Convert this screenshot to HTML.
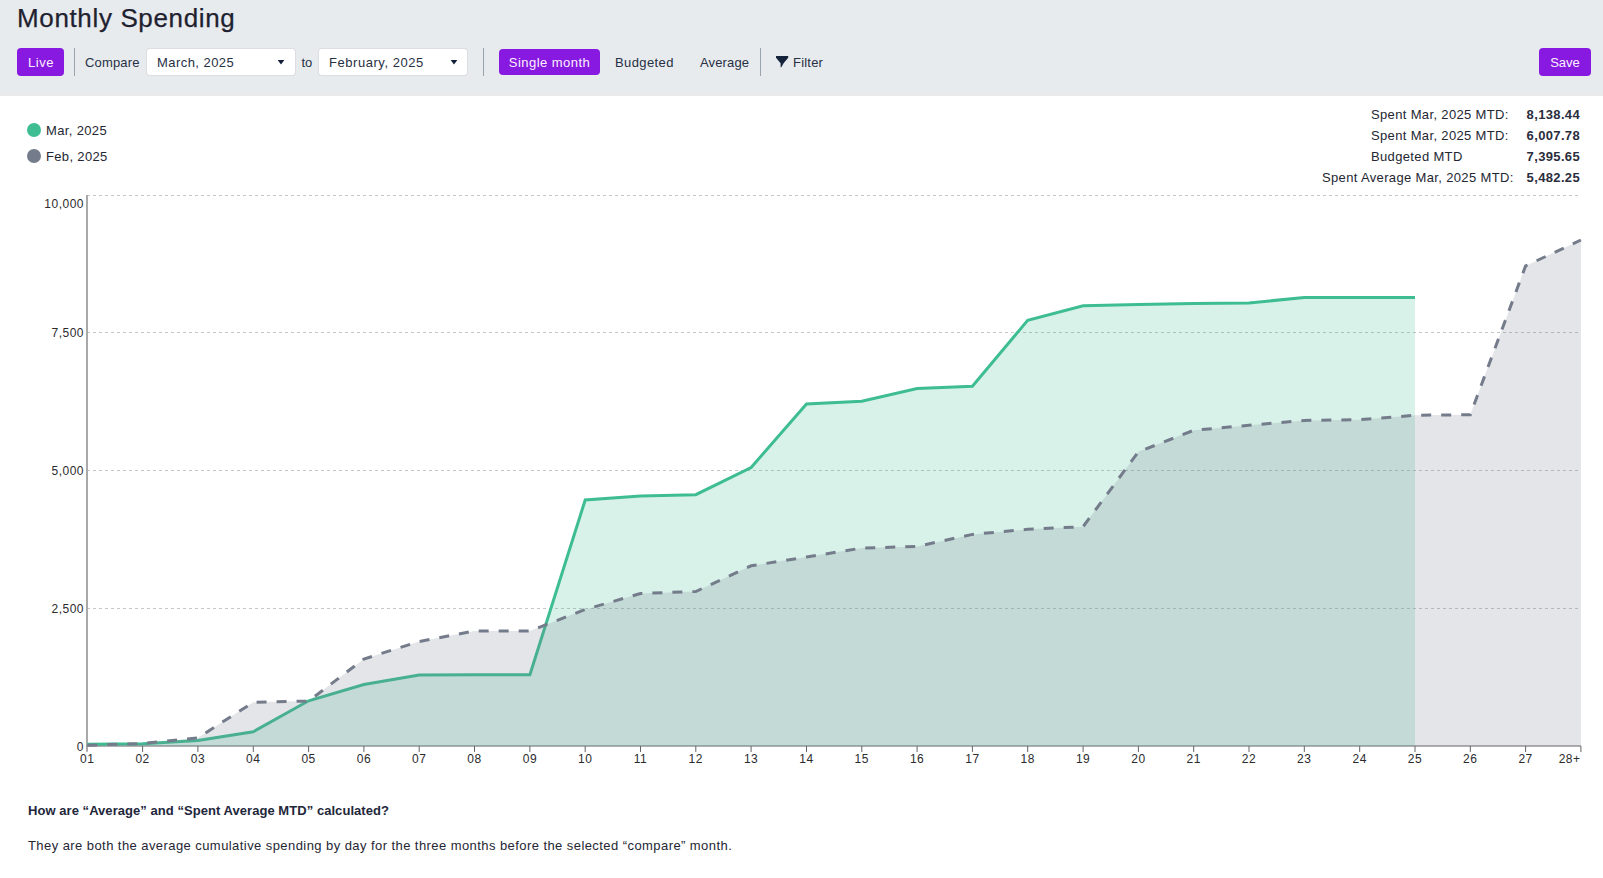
<!DOCTYPE html>
<html><head><meta charset="utf-8"><style>
*{box-sizing:border-box}
html,body{margin:0;padding:0;width:1603px;height:878px;overflow:hidden;background:#fff;font-family:"Liberation Sans",sans-serif;color:#242733}
.hdr{position:absolute;left:0;top:0;width:1603px;height:96px;background:#e7ebee}
.abs{position:absolute;white-space:nowrap}
.title{left:17px;top:3px;font-size:26px;line-height:30px;letter-spacing:0.64px;color:#1f2130;-webkit-text-stroke:0.25px #1f2130}
.btnp{position:absolute;background:#8719e0;color:#fff;border-radius:4px;font-size:13px;display:flex;align-items:center;justify-content:center}
.sep{position:absolute;width:1px;background:#9aa3b0}
.t13{font-size:13px;line-height:16px;color:#283044}
.dd{position:absolute;background:#fff;border-radius:3px;height:26px;top:49px;box-shadow:0 0 0 1px #dcdee3}
.dd span{position:absolute;left:10px;top:6px;font-size:13px;line-height:16px;color:#283044;letter-spacing:0.3px}
.tri{position:absolute;width:0;height:0;border-left:4px solid transparent;border-right:4px solid transparent;border-top:5px solid #1b1d2a}
svg.chart{position:absolute;left:0;top:0}
.leg{font-size:13px;line-height:16px;letter-spacing:0.35px}
.dot{position:absolute;width:14px;height:14px;border-radius:50%}
.st{font-size:13px;line-height:16px;letter-spacing:0.35px}
.val{font-weight:700;text-align:right;color:#2a2d3c}
</style></head><body>
<div class="hdr"></div><div style="position:absolute;left:0;top:92px;width:1603px;height:4px;background:#e9eaec"></div>
<div class="abs title">Monthly Spending</div>
<div class="btnp" style="left:17px;top:48px;width:47px;height:28px;letter-spacing:0.6px;padding-left:1px;color:#fdf0ff">Live</div>
<div class="sep" style="left:74px;top:48px;height:28px"></div>
<div class="abs t13" style="left:85px;top:55px;letter-spacing:0.15px">Compare</div>
<div class="dd" style="left:147px;width:148px"><span style="letter-spacing:0.45px">March, 2025</span><svg style="position:absolute;left:130px;top:10px" width="8" height="6"><path d="M0.6,0.9 H7.4 L4,5.6 Z" fill="#13203a"/></svg></div>
<div class="abs t13" style="left:301.5px;top:55px">to</div>
<div class="dd" style="left:319px;width:148px"><span style="letter-spacing:0.55px">February, 2025</span><svg style="position:absolute;left:131px;top:10px" width="8" height="6"><path d="M0.6,0.9 H7.4 L4,5.6 Z" fill="#13203a"/></svg></div>
<div class="sep" style="left:483px;top:48px;height:28px"></div>
<div class="btnp" style="left:499px;top:49px;width:101px;height:26px;letter-spacing:0.45px;color:#fdf0ff">Single month</div>
<div class="abs t13" style="left:615px;top:55px;letter-spacing:0.4px">Budgeted</div>
<div class="abs t13" style="left:700px;top:55px;letter-spacing:0.15px">Average</div>
<div class="sep" style="left:760px;top:48px;height:28px"></div>
<svg class="abs" style="left:775px;top:56px" width="14" height="12" viewBox="0 0 14 12"><path d="M1,0 H13.2 V1.8 L8.6,7.2 L6.3,11.3 H5.6 V7.2 L1,1.8 Z" fill="#15233a"/></svg>
<div class="abs t13" style="left:793px;top:55px;letter-spacing:0.2px">Filter</div>
<div class="btnp" style="left:1539px;top:48px;width:52px;height:28px;color:#fdf0ff">Save</div>

<svg class="chart" width="1603" height="878" viewBox="0 0 1603 878">
<line x1="87" y1="195.5" x2="1580" y2="195.5" stroke="#c6c6c6" stroke-width="1" stroke-dasharray="3 3"/>
<line x1="87" y1="332.5" x2="1580" y2="332.5" stroke="#c6c6c6" stroke-width="1" stroke-dasharray="3 3"/>
<line x1="87" y1="470.5" x2="1580" y2="470.5" stroke="#c6c6c6" stroke-width="1" stroke-dasharray="3 3"/>
<line x1="87" y1="608.5" x2="1580" y2="608.5" stroke="#c6c6c6" stroke-width="1" stroke-dasharray="3 3"/>

<line x1="87" y1="195" x2="87" y2="751.8" stroke="#a9a9a9" stroke-width="2"/>
<line x1="86" y1="746" x2="1581" y2="746" stroke="#969696" stroke-width="1.5"/>
<path d="M87.3,744.2 L142.6,743.8 L197.9,740.5 L253.3,731.7 L308.6,700.8 L363.9,684.5 L419.2,675.0 L474.5,674.8 L529.9,674.8 L585.2,500.0 L640.5,496.1 L695.8,494.7 L751.1,467.6 L806.5,404.0 L861.8,401.2 L917.1,388.6 L972.4,386.2 L1027.7,320.3 L1083.1,305.7 L1138.4,304.4 L1193.7,303.4 L1249.0,303.0 L1304.3,297.4 L1359.7,297.4 L1415.0,297.4 L1415.0,746 L87.3,746 Z" fill="#3ebd93" fill-opacity="0.2" stroke="none"/>
<path d="M87.3,744.2 L142.6,743.8 L197.9,740.5 L253.3,731.7 L308.6,700.8 L363.9,684.5 L419.2,675.0 L474.5,674.8 L529.9,674.8 L585.2,500.0 L640.5,496.1 L695.8,494.7 L751.1,467.6 L806.5,404.0 L861.8,401.2 L917.1,388.6 L972.4,386.2 L1027.7,320.3 L1083.1,305.7 L1138.4,304.4 L1193.7,303.4 L1249.0,303.0 L1304.3,297.4 L1359.7,297.4 L1415.0,297.4" fill="none" stroke="#3ebd93" stroke-width="3"/>
<path d="M87.3,745.2 L142.6,743.5 L197.9,737.8 L253.3,702.3 L308.6,701.1 L363.9,659.0 L419.2,641.5 L474.5,631.0 L529.9,631.0 L585.2,609.5 L640.5,593.5 L695.8,591.5 L751.1,565.8 L806.5,557.0 L861.8,548.1 L917.1,546.4 L972.4,534.4 L1027.7,529.3 L1083.1,526.7 L1138.4,451.8 L1193.7,430.3 L1249.0,425.3 L1304.3,420.4 L1359.7,419.7 L1415.0,415.3 L1470.3,414.7 L1525.6,265.9 L1580.9,240.0 L1580.9,746 L87.3,746 Z" fill="#747c8b" fill-opacity="0.2" stroke="none"/>
<path d="M87.3,745.2 L142.6,743.5 L197.9,737.8 L253.3,702.3 L308.6,701.1 L363.9,659.0 L419.2,641.5 L474.5,631.0 L529.9,631.0 L585.2,609.5 L640.5,593.5 L695.8,591.5 L751.1,565.8 L806.5,557.0 L861.8,548.1 L917.1,546.4 L972.4,534.4 L1027.7,529.3 L1083.1,526.7 L1138.4,451.8 L1193.7,430.3 L1249.0,425.3 L1304.3,420.4 L1359.7,419.7 L1415.0,415.3 L1470.3,414.7 L1525.6,265.9 L1580.9,240.0" fill="none" stroke="#747c8b" stroke-width="3" stroke-dasharray="10 10"/>
<line x1="142.6" y1="746" x2="142.6" y2="752" stroke="#666" stroke-width="1"/>
<line x1="197.9" y1="746" x2="197.9" y2="752" stroke="#666" stroke-width="1"/>
<line x1="253.3" y1="746" x2="253.3" y2="752" stroke="#666" stroke-width="1"/>
<line x1="308.6" y1="746" x2="308.6" y2="752" stroke="#666" stroke-width="1"/>
<line x1="363.9" y1="746" x2="363.9" y2="752" stroke="#666" stroke-width="1"/>
<line x1="419.2" y1="746" x2="419.2" y2="752" stroke="#666" stroke-width="1"/>
<line x1="474.5" y1="746" x2="474.5" y2="752" stroke="#666" stroke-width="1"/>
<line x1="529.9" y1="746" x2="529.9" y2="752" stroke="#666" stroke-width="1"/>
<line x1="585.2" y1="746" x2="585.2" y2="752" stroke="#666" stroke-width="1"/>
<line x1="640.5" y1="746" x2="640.5" y2="752" stroke="#666" stroke-width="1"/>
<line x1="695.8" y1="746" x2="695.8" y2="752" stroke="#666" stroke-width="1"/>
<line x1="751.1" y1="746" x2="751.1" y2="752" stroke="#666" stroke-width="1"/>
<line x1="806.5" y1="746" x2="806.5" y2="752" stroke="#666" stroke-width="1"/>
<line x1="861.8" y1="746" x2="861.8" y2="752" stroke="#666" stroke-width="1"/>
<line x1="917.1" y1="746" x2="917.1" y2="752" stroke="#666" stroke-width="1"/>
<line x1="972.4" y1="746" x2="972.4" y2="752" stroke="#666" stroke-width="1"/>
<line x1="1027.7" y1="746" x2="1027.7" y2="752" stroke="#666" stroke-width="1"/>
<line x1="1083.1" y1="746" x2="1083.1" y2="752" stroke="#666" stroke-width="1"/>
<line x1="1138.4" y1="746" x2="1138.4" y2="752" stroke="#666" stroke-width="1"/>
<line x1="1193.7" y1="746" x2="1193.7" y2="752" stroke="#666" stroke-width="1"/>
<line x1="1249.0" y1="746" x2="1249.0" y2="752" stroke="#666" stroke-width="1"/>
<line x1="1304.3" y1="746" x2="1304.3" y2="752" stroke="#666" stroke-width="1"/>
<line x1="1359.7" y1="746" x2="1359.7" y2="752" stroke="#666" stroke-width="1"/>
<line x1="1415.0" y1="746" x2="1415.0" y2="752" stroke="#666" stroke-width="1"/>
<line x1="1470.3" y1="746" x2="1470.3" y2="752" stroke="#666" stroke-width="1"/>
<line x1="1525.6" y1="746" x2="1525.6" y2="752" stroke="#666" stroke-width="1"/>
<line x1="1580.9" y1="746" x2="1580.9" y2="752" stroke="#666" stroke-width="1"/>

<g font-family="'Liberation Sans', sans-serif" font-size="12" fill="#2b2b2e" letter-spacing="0.5">
<text x="84" y="750.8" text-anchor="end">0</text>
<text x="84" y="612.6" text-anchor="end">2,500</text>
<text x="84" y="474.9" text-anchor="end">5,000</text>
<text x="84" y="337.3" text-anchor="end">7,500</text>
<text x="84" y="207.7" text-anchor="end">10,000</text>

<text x="87.3" y="762.7" text-anchor="middle">01</text>
<text x="142.6" y="762.7" text-anchor="middle">02</text>
<text x="197.9" y="762.7" text-anchor="middle">03</text>
<text x="253.3" y="762.7" text-anchor="middle">04</text>
<text x="308.6" y="762.7" text-anchor="middle">05</text>
<text x="363.9" y="762.7" text-anchor="middle">06</text>
<text x="419.2" y="762.7" text-anchor="middle">07</text>
<text x="474.5" y="762.7" text-anchor="middle">08</text>
<text x="529.9" y="762.7" text-anchor="middle">09</text>
<text x="585.2" y="762.7" text-anchor="middle">10</text>
<text x="640.5" y="762.7" text-anchor="middle">11</text>
<text x="695.8" y="762.7" text-anchor="middle">12</text>
<text x="751.1" y="762.7" text-anchor="middle">13</text>
<text x="806.5" y="762.7" text-anchor="middle">14</text>
<text x="861.8" y="762.7" text-anchor="middle">15</text>
<text x="917.1" y="762.7" text-anchor="middle">16</text>
<text x="972.4" y="762.7" text-anchor="middle">17</text>
<text x="1027.7" y="762.7" text-anchor="middle">18</text>
<text x="1083.1" y="762.7" text-anchor="middle">19</text>
<text x="1138.4" y="762.7" text-anchor="middle">20</text>
<text x="1193.7" y="762.7" text-anchor="middle">21</text>
<text x="1249.0" y="762.7" text-anchor="middle">22</text>
<text x="1304.3" y="762.7" text-anchor="middle">23</text>
<text x="1359.7" y="762.7" text-anchor="middle">24</text>
<text x="1415.0" y="762.7" text-anchor="middle">25</text>
<text x="1470.3" y="762.7" text-anchor="middle">26</text>
<text x="1525.6" y="762.7" text-anchor="middle">27</text>
<text x="1580.5" y="762.7" text-anchor="end">28+</text>

</g>
</svg>

<div class="dot" style="left:27px;top:123px;background:#3ebd93"></div>
<div class="abs leg" style="left:46px;top:123px">Mar, 2025</div>
<div class="dot" style="left:27px;top:149px;background:#747c8b"></div>
<div class="abs leg" style="left:46px;top:149px">Feb, 2025</div>

<div class="abs st" style="left:1371px;top:107px">Spent Mar, 2025 MTD:</div>
<div class="abs st val" style="right:23px;top:107px">8,138.44</div>
<div class="abs st" style="left:1371px;top:128px">Spent Mar, 2025 MTD:</div>
<div class="abs st val" style="right:23px;top:128px">6,007.78</div>
<div class="abs st" style="left:1371px;top:149px">Budgeted MTD</div>
<div class="abs st val" style="right:23px;top:149px">7,395.65</div>
<div class="abs st" style="left:1322px;top:170px">Spent Average Mar, 2025 MTD:</div>
<div class="abs st val" style="right:23px;top:170px">5,482.25</div>

<div class="abs" style="left:28px;top:803px;font-size:13px;line-height:16px;font-weight:700;letter-spacing:0.05px;color:#22263a">How are “Average” and “Spent Average MTD” calculated?</div>
<div class="abs" style="left:28px;top:838px;font-size:13px;line-height:16px;letter-spacing:0.43px">They are both the average cumulative spending by day for the three months before the selected “compare” month.</div>
</body></html>
